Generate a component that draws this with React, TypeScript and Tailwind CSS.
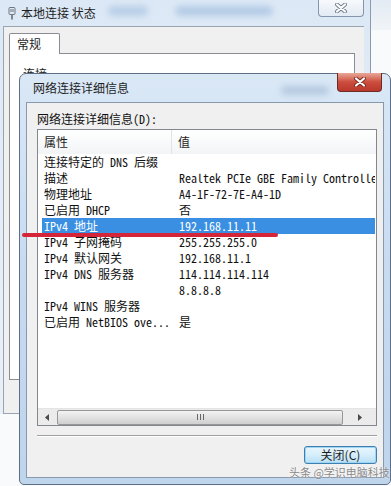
import React from 'react';

const rows: [string, string][] = [
  ['连接特定的 DNS 后缀', ''],
  ['描述', 'Realtek PCIe GBE Family Controller'],
  ['物理地址', 'A4-1F-72-7E-A4-1D'],
  ['已启用 DHCP', '否'],
  ['IPv4 地址', '192.168.11.11'],
  ['IPv4 子网掩码', '255.255.255.0'],
  ['IPv4 默认网关', '192.168.11.1'],
  ['IPv4 DNS 服务器', '114.114.114.114'],
  ['', '8.8.8.8'],
  ['IPv4 WINS 服务器', ''],
  ['已启用 NetBIOS ove...', '是'],
];

const mono = "font-['Noto_Sans_Mono_CJK_SC','Noto_Sans_CJK_SC',monospace]";
const ui = "font-['Noto_Sans_CJK_SC','Noto_Sans',sans-serif]";

const CloseGlyph: React.FC<{ color: string; shadow: string }> = ({ color, shadow }) => (
  <svg width="12" height="10" viewBox="0 0 12 10">
    <path d="M2 1.5 L10 8.5 M10 1.5 L2 8.5" stroke={shadow} strokeWidth="4" strokeLinecap="round" />
    <path d="M2 1.5 L10 8.5 M10 1.5 L2 8.5" stroke={color} strokeWidth="2.2" strokeLinecap="round" />
  </svg>
);

const BackgroundWindow: React.FC = () => (
  <div className="absolute left-0 top-0 w-[371px] h-[414px] bg-gradient-to-b from-[#dce8f5] via-[#e4edf7] to-[#e8eff7] border-r border-[#8a9bb0] flex flex-col pl-[3px] pr-[6px]">
    <div className="h-[26px] flex items-center gap-[4px] pl-[4px] relative">
      <svg width="10" height="13" viewBox="0 0 10 13" className="shrink-0">
        <rect x="2" y="0.5" width="6" height="7" rx="1" fill="#dfe6ee" stroke="#6b7785" />
        <rect x="3.5" y="2" width="1" height="3" fill="#6b7785" />
        <rect x="5.5" y="2" width="1" height="3" fill="#6b7785" />
        <rect x="4" y="7.5" width="2" height="5" fill="#7d8894" />
      </svg>
      <span className={`${ui} text-[12px] leading-[16px] text-[#1e1e1e]`}>本地连接 状态</span>
      <span className="absolute left-[105px] top-[6px] w-[40px] h-[10px] rounded-full bg-[#a9c4e2] blur-[3px] opacity-70" />
      <span className="absolute left-[172px] top-[6px] w-[98px] h-[10px] rounded-full bg-[#a3c0e0] blur-[3px] opacity-70" />
      <div className="absolute left-[315px] top-0 w-[46px] h-[17px] border border-t-0 border-[#8496ad] rounded-b-[4px] bg-gradient-to-b from-[#f7f9fc] to-[#e3eaf3] flex items-center justify-center">
        <CloseGlyph color="#ffffff" shadow="#6f7c8c" />
      </div>
    </div>
    <div className="flex-1 border-l border-t border-b border-[#9aa4b0] bg-[#f0f0f0] pl-[5px] pt-[6px] flex flex-col">
      <div className={`relative z-10 -mb-px w-[51px] h-[21px] bg-white border border-b-0 border-[#898c95] rounded-t-[2px] pl-[7px] ${ui} text-[12px] leading-[20px] text-[#1e1e1e]`}>
        常规
      </div>
      <div className="w-[346px] h-[327px] bg-white border border-[#898c95] pl-[13px] pt-[7px]">
        <span className={`${ui} text-[12px] leading-[16px] text-[#1e1e1e]`}>连接</span>
      </div>
    </div>
  </div>
);

const ScrollArrow: React.FC<{ dir: 'left' | 'right' }> = ({ dir }) => (
  <svg width="4" height="7" viewBox="0 0 4 7">
    <path d={dir === 'left' ? 'M4 0 L0 3.5 L4 7 Z' : 'M0 0 L4 3.5 L0 7 Z'} fill="#4a4a4a" />
  </svg>
);

const DetailsDialog: React.FC = () => (
  <div className="absolute left-[19px] top-[73px] w-[372px] h-[412px] border border-[#5d6f86] rounded-t-[7px] rounded-b-[5px] bg-gradient-to-b from-[#dae8f6] via-[#c6daf0] to-[#bfd5ec] flex flex-col px-[6px] pb-[6px]">
    <div className="h-[28px] shrink-0 flex items-center pl-[7px] relative">
      <span className={`${ui} text-[12px] leading-[16px] text-[#1e1e1e]`}>网络连接详细信息</span>
      <span className="absolute left-[255px] top-[12px] w-[48px] h-[9px] rounded-full bg-[#9db6d2] blur-[3px] opacity-60" />
      <div className="absolute right-[2px] top-[-1px] w-[45px] h-[19px] border border-t-0 border-[#6b2a22] rounded-b-[4px] bg-gradient-to-b from-[#e7a798] via-[#cc4c3e] to-[#b9382b] flex items-center justify-center">
        <CloseGlyph color="#ffffff" shadow="#7a2a20" />
      </div>
    </div>
    <div className="flex-1 border border-[#8799ae] bg-[#f0f0f0] pl-[10px] pt-[8px] flex flex-col">
      <div className={`${mono} text-[12px] leading-[16px] text-[#111]`}>网络连接详细信息(D):</div>
      <div className="mt-[2px] w-[340px] h-[297px] border border-[#828790] bg-white flex flex-col">
        <div className={`h-[24px] shrink-0 flex bg-gradient-to-b from-white to-[#f3f4f6] ${ui} text-[12px] text-[#1e1e1e]`}>
          <div className="w-[134px] pl-[6px] border-r border-[#e2e3e5] flex items-center">属性</div>
          <div className="pl-[6px] flex items-center">值</div>
        </div>
        <div className={`${mono} text-[12px] leading-[16px] text-[#111] flex flex-col`}>
          {rows.map(([k, v], i) => (
            <div
              key={i}
              className={`h-[16px] ml-[4px] mr-px flex whitespace-nowrap overflow-hidden ${i === 4 ? 'bg-[#3a8fe3] text-white' : ''}`}
            >
              <div className="w-[130px] shrink-0 pl-[2px]">{k}</div>
              <div className="pl-[7px]">{v}</div>
            </div>
          ))}
        </div>
        <div className="flex-1" />
        <div className="h-[17px] shrink-0 bg-[#ebebeb] border-t border-[#e4e4e4] flex items-center">
          <div className="w-[18px] flex items-center justify-center">
            <ScrollArrow dir="left" />
          </div>
          <div className="w-[286px] h-[15px] ml-px rounded-[2px] border border-[#979797] bg-gradient-to-b from-[#f3f3f3] via-[#e2e2e2] to-[#cfcfcf] flex items-center justify-center gap-[2px]">
            <span className="w-px h-[6px] bg-[#666]" />
            <span className="w-px h-[6px] bg-[#666]" />
            <span className="w-px h-[6px] bg-[#666]" />
          </div>
          <div className="flex-1 flex items-center justify-center">
            <ScrollArrow dir="right" />
          </div>
        </div>
      </div>
      <div className="mt-[9px] w-[340px] h-px bg-[#a0a0a0] shadow-[0_1px_0_#ffffff]" />
      <div className="w-[340px] flex justify-end mt-[10px]">
        <div className={`w-[73px] h-[18px] rounded-[3px] border border-[#3c7fb1] bg-gradient-to-b from-[#e8f5fc] via-[#d6eefb] to-[#b8dff5] shadow-[inset_0_0_0_1px_#9fd4f2] flex items-center justify-center ${ui} text-[12px] leading-[16px] text-[#1e1e1e]`}>
          关闭(C)
        </div>
      </div>
    </div>
  </div>
);

export default function App() {
  return (
    <div className="relative w-[391px] h-[486px] overflow-hidden bg-[#f9fafb]">
      <div className="absolute left-[371px] top-0 w-[20px] h-[30px] bg-gradient-to-b from-[#e3ebf4] to-[#f1f4f7]" />
      <BackgroundWindow />
      <DetailsDialog />
      <div className="absolute left-[22px] top-[233px] w-[256px] h-[4px] rounded-full bg-[#d42638]" />
      <div className={`absolute left-[289px] top-[466px] ${ui} text-[11px] leading-[12px] text-[#8a8a8a] [text-shadow:0_0_2px_#ffffff]`}>
        头条 @学识电脑科技
      </div>
    </div>
  );
}
